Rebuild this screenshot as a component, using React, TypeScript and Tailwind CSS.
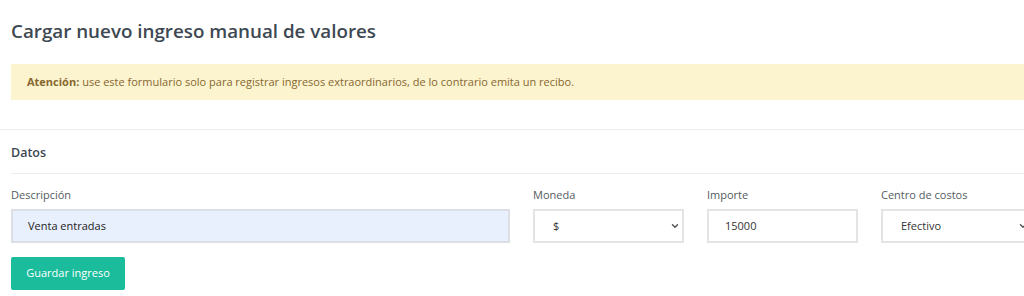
import { ChevronDown } from "lucide-react";

function Field({ label, width, children }: { label: string; width: string; children: React.ReactNode }) {
  return (
    <div className={`flex flex-col ${width}`}>
      <label className="text-[11px] leading-[18px] text-[#555b61] mb-[5px]">{label}</label>
      {children}
    </div>
  );
}

function SelectBox({ value }: { value: string }) {
  return (
    <div className="h-[34px] border-2 border-[#e3e4e6] bg-white flex items-center justify-between pl-[18px] pr-[2px] text-[11px] text-[#333]">
      <span>{value}</span>
      <ChevronDown size={10} strokeWidth={3.5} className="text-[#555]" />
    </div>
  );
}

export default function App() {
  return (
    <div
      className="w-[1024px] h-[296px] overflow-hidden bg-white"
      style={{ fontFamily: '"Open Sans", "Noto Sans", sans-serif' }}
    >
      <div className="w-[1043px]">
        <div className="px-[11px] pt-[19px]">
          <h1 className="text-[18.8px] leading-[24px] font-semibold text-[#3d4852]">
            Cargar nuevo ingreso manual de valores
          </h1>
          <div className="mt-[21px] h-[36px] flex items-center px-[16px] bg-[#fcf3cf] text-[11px] text-[#86682f]">
            <span>
              <b className="font-bold">Atención:</b> use este formulario solo para registrar ingresos extraordinarios, de lo contrario emita un recibo.
            </span>
          </div>
        </div>

        <div className="mt-[29px] border-t border-[#ececec]" />

        <div className="px-[11px]">
          <div className="h-[44px] pt-[3px] flex items-center border-b border-[#ececec] text-[12.5px] font-semibold text-[#3d4852]">
            Datos
          </div>

          <div className="mt-[12px] flex gap-[23px]">
            <Field label="Descripción" width="w-[499px]">
              <div className="h-[34px] border-2 border-[#dcdfe3] bg-[#e8f0fe] flex items-center pl-[15px] text-[11px] text-[#222]">
                Venta entradas
              </div>
            </Field>
            <Field label="Moneda" width="w-[151px]">
              <SelectBox value="$" />
            </Field>
            <Field label="Importe" width="w-[151px]">
              <div className="h-[34px] border-2 border-[#e3e4e6] bg-white flex items-center pl-[16px] text-[11px] text-[#333]">
                15000
              </div>
            </Field>
            <Field label="Centro de costos" width="w-[151px]">
              <SelectBox value="Efectivo" />
            </Field>
          </div>

          <button className="mt-[14px] h-[33px] w-[114px] rounded-[2px] bg-[#1abc9c] text-white text-[11px] flex items-center justify-center">
            Guardar ingreso
          </button>
        </div>
      </div>
    </div>
  );
}
